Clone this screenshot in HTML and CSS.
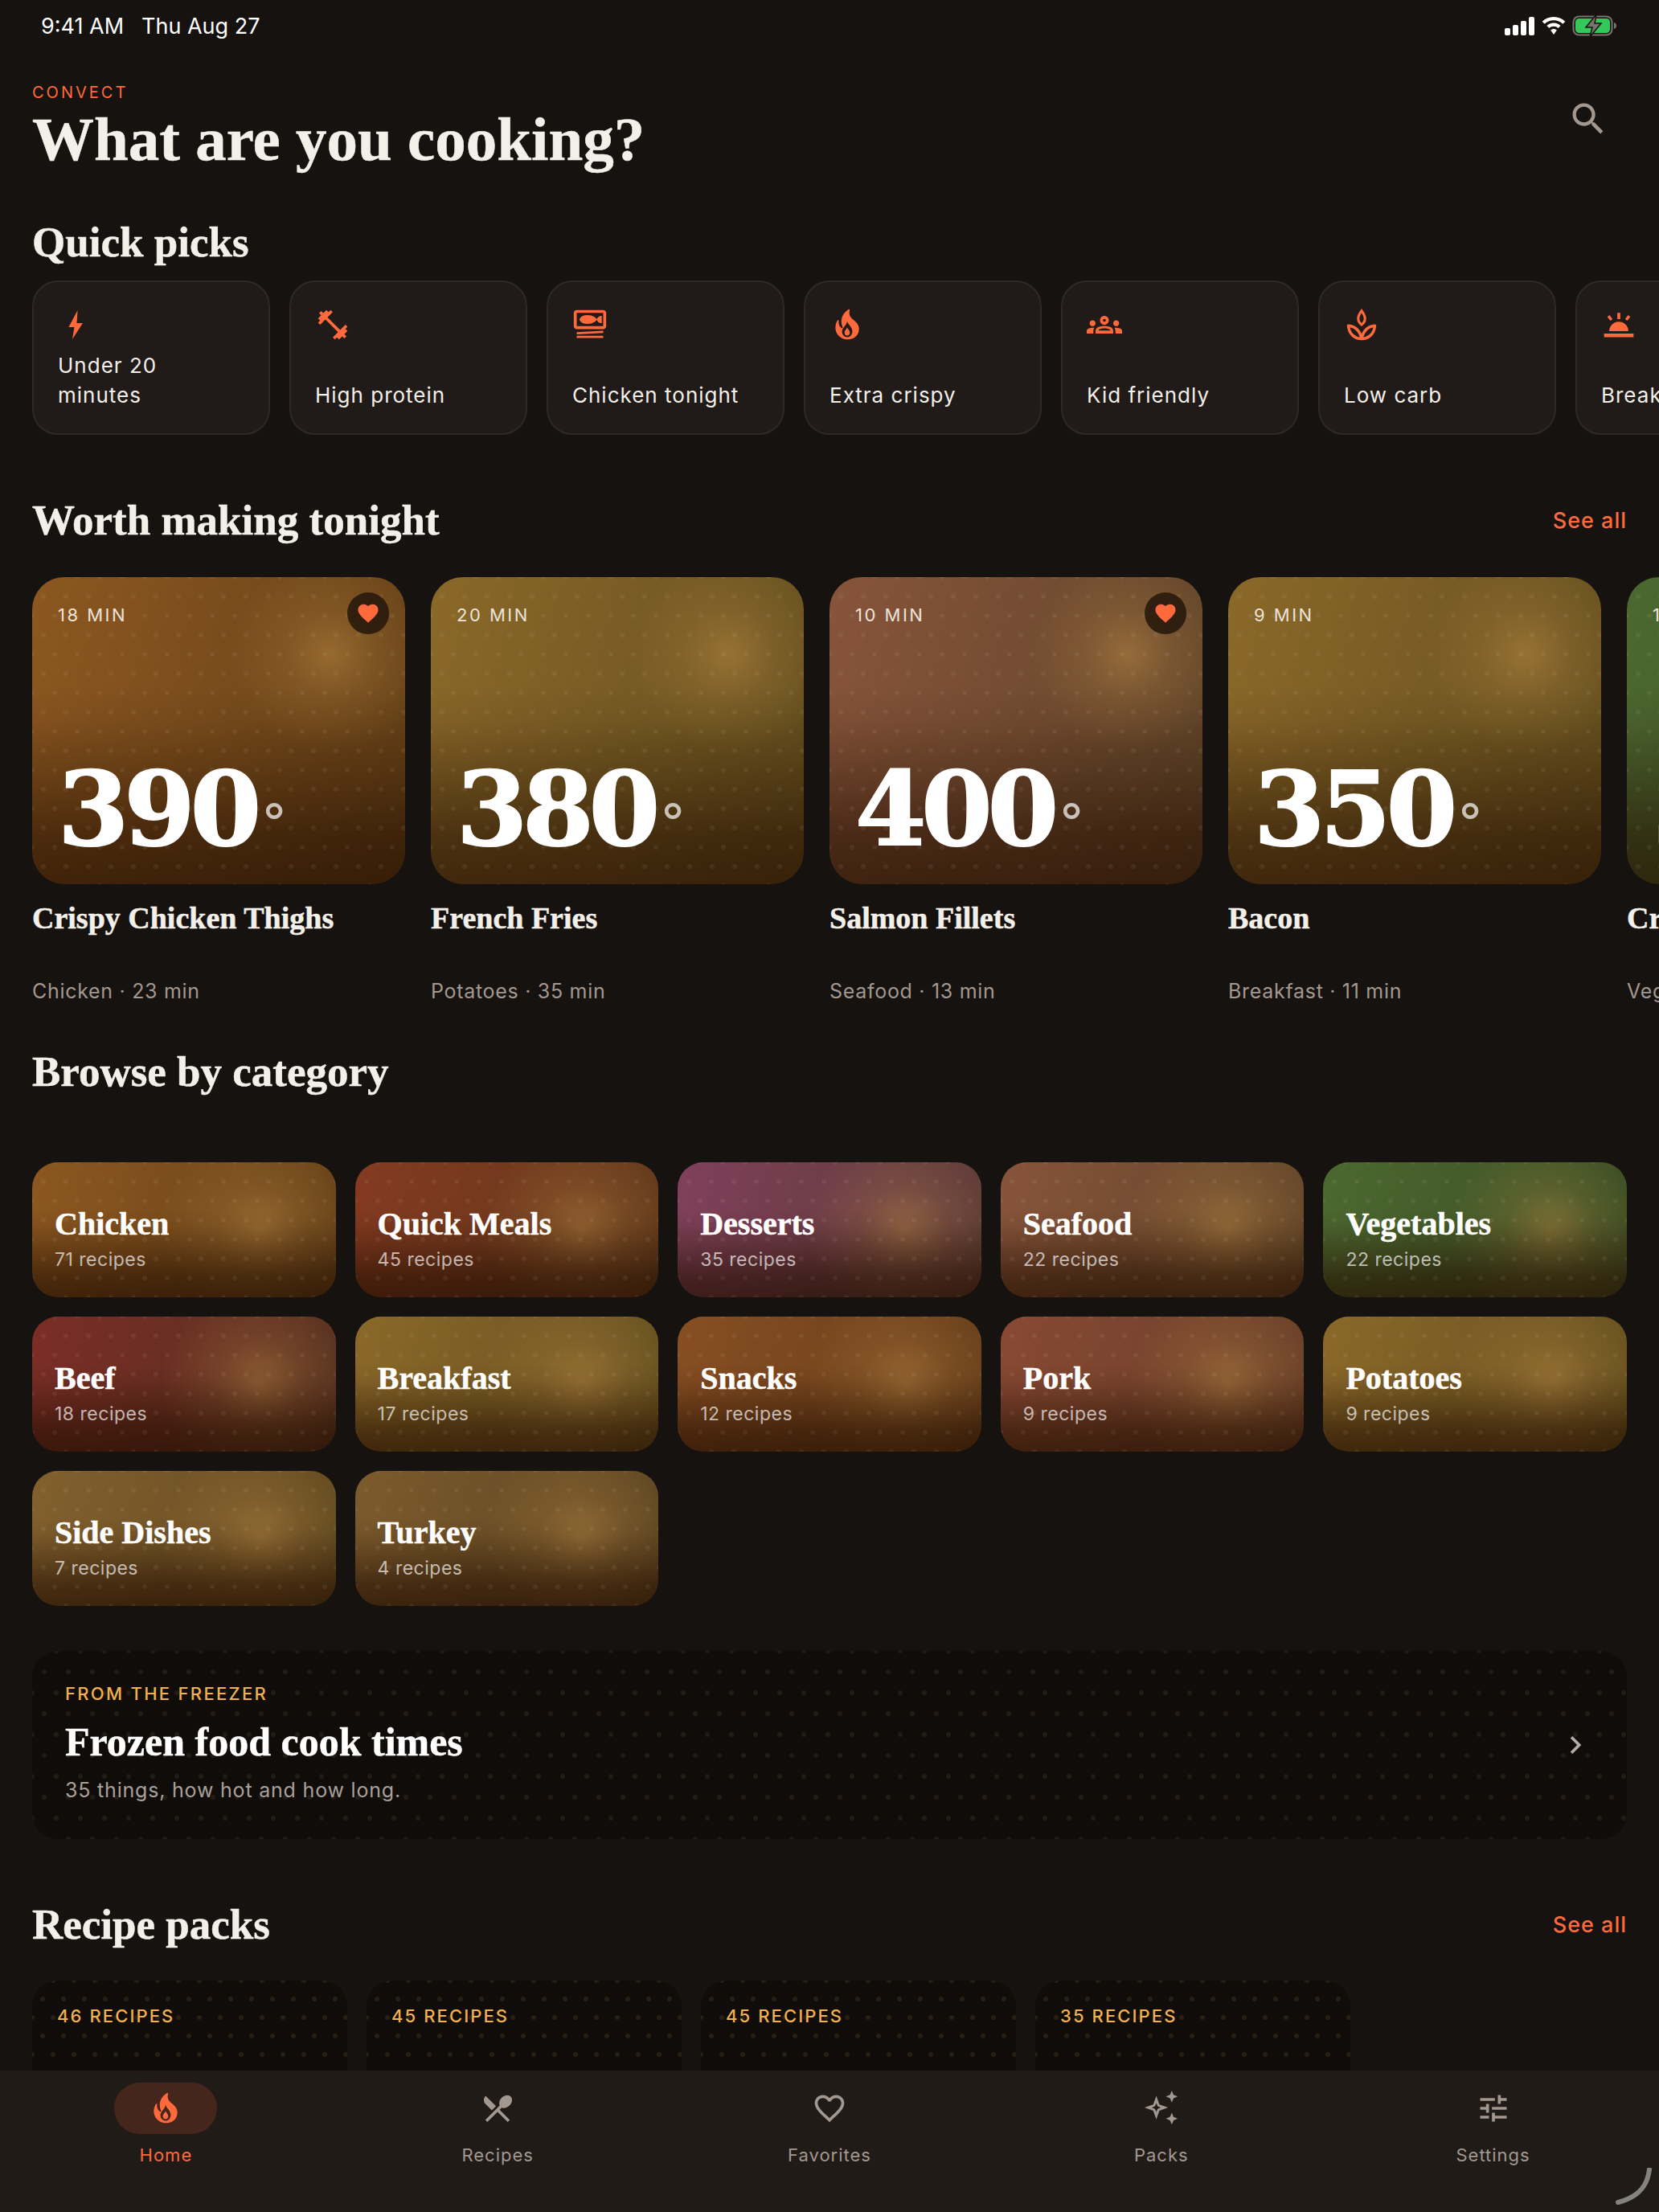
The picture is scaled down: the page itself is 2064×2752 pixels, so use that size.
FILE: index.html
```html
<!DOCTYPE html>
<html lang="en">
<head>
    <meta charset="UTF-8">
    <meta name="viewport" content="width=device-width, initial-scale=1.0">
    <title>Convect</title>
    <link rel="stylesheet" href="styles.css">
</head>
<body>
<div class="app">
    <div class="status-bar">
        <div class="status-time"><span>9:41 AM</span><span>Thu Aug 27</span></div>
        <div class="status-icons">
            <svg width="38" height="24" viewBox="0 0 38 24"><rect x="0" y="15" width="7" height="9" rx="2"/><rect x="10" y="11" width="7" height="13" rx="2"/><rect x="20" y="6" width="7" height="18" rx="2"/><rect x="30" y="1" width="7" height="23" rx="2"/></svg>
            <svg width="30" height="22" viewBox="0 0 30 22"><path d="M15 0C9.400 0 4.400 2.200.7 5.800l3 3C6.600 6 10.600 4.300 15 4.300s8.400 1.700 11.300 4.500l3-3C25.600 2.200 20.600 0 15 0z"/><path d="M15 7.500c-3.300 0-6.400 1.300-8.600 3.500l3 3c1.500-1.400 3.400-2.300 5.600-2.300s4.100.9 5.600 2.300l3-3c-2.200-2.200-5.300-3.500-8.600-3.500z"/><path d="M15 15c-1.500 0-2.900.6-3.900 1.600L15 22l3.900-5.400C17.900 15.600 16.500 15 15 15z"/></svg>
            <svg width="56" height="28" viewBox="0 0 56 28"><rect x="1.500" y="2.500" width="48" height="23" rx="7" fill="none" stroke="#77736f" stroke-width="2"/><rect x="4" y="5" width="43" height="18" rx="4.500" fill="#34c759"/><path d="M52 10c2 .5 3 2 3 4s-1 3.500-3 4z" fill="#77736f"/><path d="M30 0 17 16h8l-3 12 14-17h-8z" fill="#77736f" stroke="#15120f" stroke-width="1.500"/></svg>
        </div>
    </div>

    <div class="content">
        <header class="page-head">
            <div>
                <div class="brand">CONVECT</div>
                <h1>What are you cooking?</h1>
            </div>
            <svg class="search-icon" viewBox="0 0 24 24"><path d="M15.500 14h-.79l-.28-.27C15.410 12.590 16 11.110 16 9.500 16 5.910 13.090 3 9.500 3S3 5.910 3 9.500 5.910 16 9.500 16c1.610 0 3.090-.59 4.230-1.570l.27.28v.79l5 4.990L20.490 19l-4.990-5zm-6 0C7.010 14 5 11.990 5 9.500S7.010 5 9.500 5 14 7.010 14 9.500 11.990 14 9.500 14z"/></svg>
        </header>

        <section class="quick">
            <h2>Quick picks</h2>
            <div class="chip-row">
                <div class="chip">
                    <svg class="chip-icon" viewBox="0 0 44 44"><path d="M24.600 4 13.400 25h7.100L18 40l13-20h-7.500z"/></svg>
                    <div class="chip-label">Under 20<br>minutes</div>
                </div>
                <div class="chip">
                    <svg class="chip-icon" viewBox="0 0 24 24"><path d="M20.570 14.860 22 13.430 20.570 12 17 15.570 8.430 7 12 3.430 10.570 2 9.140 3.430 7.710 2 5.570 4.140 4.140 2.710 2.710 4.140l1.430 1.430L2 7.710l1.430 1.430L2 10.570 3.430 12 7 8.430 15.570 17 12 20.570 13.430 22l1.430-1.430L16.290 22l2.140-2.140 1.430 1.430 1.430-1.430-1.430-1.430L22 16.290z"/></svg>
                    <div class="chip-label">High protein</div>
                </div>
                <div class="chip">
                    <svg class="chip-icon" viewBox="0 0 24 24"><path d="M21.050 17.560 3.080 18.500 3 17l17.980-.94zM21 19.480H3v1.500h18zM23 13V4c0-1.100-.9-2-2-2H3C1.900 2 1 2.900 1 4v9c0 1.100.9 2 2 2h18c1.100 0 2-.9 2-2zm-2 0H3V4h18zM20 6c-1.680 0-3.040.98-3.210 2.230C16.150 7.500 14.060 5.500 10.250 5.500c-4.670 0-5.420 3-5.420 3s.75 3 5.420 3c3.810 0 5.900-2 6.540-2.730C16.960 10.020 18.320 11 20 11z"/></svg>
                    <div class="chip-label">Chicken tonight</div>
                </div>
                <div class="chip">
                    <svg class="chip-icon" viewBox="0 0 24 24"><path fill-rule="evenodd" d="M19.480 12.350c-1.570-4.080-7.160-4.300-5.810-10.230.1-.44-.37-.78-.75-.55C9.290 3.710 6.680 8 8.870 13.620c.18.46-.36.89-.75.59-1.810-1.370-2-3.340-1.840-4.750.06-.52-.62-.77-.91-.34C4.690 10.160 4 11.840 4 14.370c.38 5.600 5.110 7.320 6.810 7.540 2.430.31 5.060-.14 6.950-1.870 2.080-1.930 2.840-5.010 1.720-7.690zM12 9.500c.2 2 3.500 3.800 3.500 7 0 2.400-1.700 4-3.500 4s-3.500-1.600-3.500-3.800c0-2.700 3.200-4.200 3.500-7.200z"/><path d="M12 13.800c.3 1.200 1.800 2 1.800 3.600 0 1.100-.8 1.900-1.800 1.900s-1.800-.8-1.800-1.900c0-1.600 1.500-2.400 1.800-3.600z"/></svg>
                    <div class="chip-label">Extra crispy</div>
                </div>
                <div class="chip">
                    <svg class="chip-icon" viewBox="0 0 24 24"><path fill-rule="evenodd" d="M12 12.750c1.630 0 3.070.39 4.240.9 1.080.48 1.760 1.560 1.760 2.730V18H6v-1.610c0-1.180.68-2.260 1.760-2.730 1.170-.52 2.610-.91 4.240-.91zM8 16h8v-.2c0-.3-.2-.5-.5-.6-1-.4-2.200-.7-3.500-.7s-2.500.3-3.500.7c-.3.1-.5.3-.5.6zM12 6c-1.660 0-3 1.340-3 3s1.340 3 3 3 3-1.340 3-3-1.340-3-3-3zm0 2c.55 0 1 .45 1 1s-.45 1-1 1-1-.45-1-1 .45-1 1-1z"/><path d="M4 13c1.100 0 2-.9 2-2s-.9-2-2-2-2 .9-2 2 .9 2 2 2zm1.130 1.100C4.760 14.040 4.390 14 4 14c-.99 0-1.930.21-2.780.58C.48 14.900 0 15.620 0 16.430V18h4.500v-1.610c0-.83.23-1.610.63-2.290zM20 13c1.100 0 2-.9 2-2s-.9-2-2-2-2 .9-2 2 .9 2 2 2zm4 3.430c0-.81-.48-1.530-1.220-1.850C21.930 14.210 20.990 14 20 14c-.39 0-.76.04-1.130.1.4.68.63 1.460.63 2.290V18H24z"/></svg>
                    <div class="chip-label">Kid friendly</div>
                </div>
                <div class="chip">
                    <svg class="chip-icon" viewBox="0 0 24 24"><path d="M12 2.500c-1.300 1.800-2.300 3.500-2.300 5.300s1 3.300 2.300 4.200c1.300-.9 2.300-2.400 2.300-4.200S13.300 4.300 12 2.500z" fill="none" stroke="#ff6a3d" stroke-width="1.700"/><path d="M12 21.500c-4.500 0-8.500-3-9-8.800 3.800.3 7.600 2.400 9 8.800zm0 0c4.500 0 8.500-3 9-8.800-3.800.3-7.600 2.400-9 8.800z" fill="none" stroke="#ff6a3d" stroke-width="1.900" stroke-linejoin="round"/></svg>
                    <div class="chip-label">Low carb</div>
                </div>
                <div class="chip">
                    <svg class="chip-icon" viewBox="0 0 24 24"><path d="M2 18h20v2.400H2zM5.500 16.400a6.500 6.500 0 0 1 13 0zM11 4h2v4.200h-2zM4.200 6.700l1.500-1.300 2 2.800-1.400 1.100zM19.800 6.700l-1.500-1.300-2 2.800 1.400 1.100z"/></svg>
                    <div class="chip-label">Breakfast</div>
                </div>
            </div>
        </section>

        <section class="tonight">
            <div class="section-head">
                <h2>Worth making tonight</h2>
                <a class="see-all">See all</a>
            </div>
            <div class="recipe-row">
                <article class="recipe">
                    <div class="recipe-art tone-chicken">
                        <div class="recipe-time">18 MIN</div>
                        <div class="fav"><svg viewBox="0 0 24 24"><path d="M12 21.350 10.550 20.030C5.400 15.360 2 12.280 2 8.500 2 5.420 4.420 3 7.500 3c1.740 0 3.410.81 4.500 2.090C13.090 3.810 14.760 3 16.500 3 19.580 3 22 5.420 22 8.500c0 3.780-3.400 6.860-8.550 11.540z"/></svg></div>
                        <div class="temp">390<span class="deg">°</span></div>
                    </div>
                    <h3>Crispy Chicken Thighs</h3>
                    <p>Chicken · 23 min</p>
                </article>
                <article class="recipe">
                    <div class="recipe-art tone-potato">
                        <div class="recipe-time">20 MIN</div>
                        <div class="temp">380<span class="deg">°</span></div>
                    </div>
                    <h3>French Fries</h3>
                    <p>Potatoes · 35 min</p>
                </article>
                <article class="recipe">
                    <div class="recipe-art tone-seafood">
                        <div class="recipe-time">10 MIN</div>
                        <div class="fav"><svg viewBox="0 0 24 24"><path d="M12 21.350 10.550 20.030C5.400 15.360 2 12.280 2 8.500 2 5.420 4.420 3 7.500 3c1.740 0 3.410.81 4.500 2.090C13.090 3.810 14.760 3 16.500 3 19.580 3 22 5.420 22 8.500c0 3.780-3.400 6.860-8.550 11.540z"/></svg></div>
                        <div class="temp">400<span class="deg">°</span></div>
                    </div>
                    <h3>Salmon Fillets</h3>
                    <p>Seafood · 13 min</p>
                </article>
                <article class="recipe">
                    <div class="recipe-art tone-potato">
                        <div class="recipe-time">9 MIN</div>
                        <div class="temp">350<span class="deg">°</span></div>
                    </div>
                    <h3>Bacon</h3>
                    <p>Breakfast · 11 min</p>
                </article>
                <article class="recipe">
                    <div class="recipe-art tone-veg">
                        <div class="recipe-time">12 MIN</div>
                        <div class="temp">375<span class="deg">°</span></div>
                    </div>
                    <h3>Crispy Sprouts</h3>
                    <p>Vegetables · 15 min</p>
                </article>
            </div>
        </section>

        <section class="browse">
            <h2>Browse by category</h2>
            <div class="cat-grid">
                <div class="cat tone-chicken"><h4>Chicken</h4><p>71 recipes</p></div>
                <div class="cat tone-quick"><h4>Quick Meals</h4><p>45 recipes</p></div>
                <div class="cat tone-dessert"><h4>Desserts</h4><p>35 recipes</p></div>
                <div class="cat tone-seafood"><h4>Seafood</h4><p>22 recipes</p></div>
                <div class="cat tone-veg"><h4>Vegetables</h4><p>22 recipes</p></div>
                <div class="cat tone-beef"><h4>Beef</h4><p>18 recipes</p></div>
                <div class="cat tone-potato"><h4>Breakfast</h4><p>17 recipes</p></div>
                <div class="cat tone-snack"><h4>Snacks</h4><p>12 recipes</p></div>
                <div class="cat tone-pork"><h4>Pork</h4><p>9 recipes</p></div>
                <div class="cat tone-potato"><h4>Potatoes</h4><p>9 recipes</p></div>
                <div class="cat tone-side"><h4>Side Dishes</h4><p>7 recipes</p></div>
                <div class="cat tone-turkey"><h4>Turkey</h4><p>4 recipes</p></div>
            </div>
        </section>

        <div class="freezer">
            <div>
                <div class="freezer-tag">FROM THE FREEZER</div>
                <div class="freezer-title">Frozen food cook times</div>
                <div class="freezer-sub">35 things, how hot and how long.</div>
            </div>
            <svg class="chevron" viewBox="0 0 24 24"><path d="M10 6 8.590 7.410 13.170 12l-4.580 4.590L10 18l6-6z"/></svg>
        </div>

        <section class="packs">
            <div class="section-head">
                <h2>Recipe packs</h2>
                <a class="see-all">See all</a>
            </div>
            <div class="pack-row">
                <div class="pack">46 RECIPES</div>
                <div class="pack">45 RECIPES</div>
                <div class="pack">45 RECIPES</div>
                <div class="pack">35 RECIPES</div>
            </div>
        </section>
    </div>

    <nav class="tab-bar">
        <div class="tab active">
            <div class="tab-pill">
                <svg viewBox="0 0 24 24"><path fill-rule="evenodd" d="M19.480 12.350c-1.570-4.080-7.160-4.300-5.810-10.230.1-.44-.37-.78-.75-.55C9.290 3.710 6.680 8 8.870 13.620c.18.46-.36.89-.75.59-1.810-1.370-2-3.340-1.840-4.750.06-.52-.62-.77-.91-.34C4.690 10.160 4 11.840 4 14.370c.38 5.600 5.110 7.320 6.810 7.540 2.430.31 5.060-.14 6.950-1.870 2.080-1.930 2.840-5.010 1.720-7.690zM12 9.500c.2 2 3.500 3.800 3.500 7 0 2.400-1.700 4-3.500 4s-3.500-1.600-3.500-3.800c0-2.700 3.200-4.200 3.500-7.200z"/><path d="M12 13.800c.3 1.200 1.800 2 1.800 3.600 0 1.100-.8 1.900-1.800 1.900s-1.800-.8-1.800-1.900c0-1.600 1.500-2.400 1.800-3.600z"/></svg>
            </div>
            <span>Home</span>
        </div>
        <div class="tab">
            <div class="tab-pill">
                <svg viewBox="0 0 24 24"><path d="M8.100 13.340l2.830-2.830L3.910 3.500c-1.560 1.560-1.560 4.090 0 5.660zm6.780-1.810c1.530.71 3.680.21 5.270-1.380 1.910-1.910 2.280-4.650.81-6.120-1.460-1.460-4.200-1.100-6.120.81-1.590 1.590-2.090 3.740-1.380 5.270L3.700 19.870l1.410 1.410L12 14.410l6.880 6.880 1.410-1.410L13.410 13z"/></svg>
            </div>
            <span>Recipes</span>
        </div>
        <div class="tab">
            <div class="tab-pill">
                <svg viewBox="0 0 24 24"><path d="M16.500 3c-1.740 0-3.410.81-4.500 2.090C10.910 3.810 9.240 3 7.500 3 4.420 3 2 5.420 2 8.500c0 3.780 3.400 6.860 8.550 11.540L12 21.350l1.450-1.320C18.600 15.360 22 12.280 22 8.500 22 5.420 19.580 3 16.500 3zm-4.400 15.550l-.1.100-.1-.1C7.140 14.240 4 11.390 4 8.500 4 6.500 5.500 5 7.500 5c1.540 0 3.040.99 3.570 2.360h1.870C13.460 5.990 14.960 5 16.500 5c2 0 3.500 1.500 3.500 3.500 0 2.890-3.140 5.740-7.900 10.050z"/></svg>
            </div>
            <span>Favorites</span>
        </div>
        <div class="tab">
            <div class="tab-pill">
                <svg viewBox="0 0 24 24"><path fill-rule="evenodd" d="M8.500 3.500 10.600 9.400 16.500 11.500 10.600 13.600 8.500 19.500 6.400 13.600.5 11.500 6.400 9.400zM8.500 8.500 7.600 10.600 5.500 11.500 7.600 12.400 8.500 14.500 9.400 12.400 11.500 11.500 9.400 10.600z"/><path d="M19 0l1.200 2.800L23 4l-2.800 1.200L19 8l-1.200-2.800L15 4l2.800-1.200zM19 15l1.200 2.800L23 19l-2.800 1.200L19 23l-1.200-2.800L15 19l2.800-1.200z"/></svg>
            </div>
            <span>Packs</span>
        </div>
        <div class="tab">
            <div class="tab-pill">
                <svg viewBox="0 0 24 24"><path d="M3 17v2h6v-2zM3 5v2h10V5zm10 16v-2h8v-2h-8v-2h-2v6zM7 9v2H3v2h4v2h2V9zm14 4v-2H11v2zm-6-4h2V7h4V5h-4V3h-2v6z"/></svg>
            </div>
            <span>Settings</span>
        </div>
        <svg class="corner-mark" viewBox="0 0 46 46"><path d="M43 2C41 20 32 36 4 43" fill="none" stroke="#85837f" stroke-width="6" stroke-linecap="round"/></svg>
    </nav>
</div>
</body>
</html>
```

FILE: styles.css
```css
* {
    box-sizing: border-box;
}
body {
    margin: 0;
    background-color: #15120f;
    color: #f3efe9;
    font-family: 'Inter', sans-serif;
}
h1, h2, h3, h4, p {
    margin: 0;
}
h1, h2, h3, h4 {
    font-family: 'Liberation Serif', serif;
    font-weight: 700;
    -webkit-text-stroke: 0.5px currentColor;
}
.app {
    width: 2064px;
    height: 2752px;
    display: flex;
    flex-direction: column;
    overflow: hidden;
}
.status-bar {
    height: 64px;
    flex: none;
    display: flex;
    justify-content: space-between;
    align-items: center;
    padding: 0 52px 0 51px;
    color: #fff;
}
.status-time {
    display: flex;
    gap: 22px;
    font-size: 27px;
}
.status-icons {
    display: flex;
    align-items: center;
    gap: 8px;
}
.status-icons svg {
    fill: #fff;
}
.content {
    flex: 1;
    overflow: hidden;
    padding: 0 40px;
}
.page-head {
    display: flex;
    justify-content: space-between;
    padding-top: 39px;
}
.brand {
    font-size: 20px;
    line-height: 24px;
    letter-spacing: 3px;
    color: #ff6a3d;
}
h1 {
    font-size: 77px;
    line-height: 84px;
    margin-top: 4px;
}
.search-icon {
    width: 52px;
    height: 52px;
    fill: #a39890;
    margin: 19px 22px 0 0;
}
h2 {
    font-size: 53px;
    line-height: 60px;
}
.quick {
    margin-top: 56px;
}
.chip-row {
    display: flex;
    gap: 24px;
    margin-top: 18px;
    width: 2400px;
}
.chip {
    width: 296px;
    height: 192px;
    flex: none;
    display: flex;
    flex-direction: column;
    justify-content: space-between;
    padding: 31px 30px 29px;
    background-color: #201b18;
    border: 2px solid #2f2925;
    border-radius: 32px;
}
.chip-icon {
    width: 44px;
    height: 44px;
    fill: #ff6a3d;
}
.chip-label {
    font-size: 26px;
    line-height: 37px;
    letter-spacing: 1px;
    color: #f3efe9;
}
.tonight {
    margin-top: 76px;
}
.section-head {
    display: flex;
    justify-content: space-between;
    align-items: center;
}
.see-all {
    font-size: 27px;
    font-weight: 500;
    letter-spacing: 1px;
    color: #ff6a3d;
}
.recipe-row {
    display: flex;
    gap: 32px;
    margin-top: 41px;
    width: 2500px;
}
.recipe {
    width: 464px;
    flex: none;
}
.recipe-art {
    position: relative;
    height: 382px;
    display: flex;
    flex-direction: column;
    justify-content: space-between;
    padding: 32px 32px 27px;
    border-radius: 40px;
}
.recipe-art, .cat {
    --glow-x: 80%;
    --glow-y: 25%;
    background-image:
        radial-gradient(circle, rgba(255, 255, 255, 0.06) 2.500px, transparent 3.500px),
        radial-gradient(circle, rgba(255, 255, 255, 0.06) 2.500px, transparent 3.500px),
        linear-gradient(180deg, rgba(35, 14, 0, 0) 35%, rgba(35, 14, 0, 0.08) 47%, rgba(35, 14, 0, 0.32) 65%, rgba(35, 14, 0, 0.6) 85%, rgba(35, 14, 0, 0.7) 100%),
        radial-gradient(circle at var(--glow-x) var(--glow-y), rgba(190, 140, 70, 0.5), rgba(190, 140, 70, 0.2) 55px, rgba(190, 140, 70, 0) 125px),
        linear-gradient(100deg, var(--tone-a), var(--tone-b));
    background-size: 28px 48px, 28px 48px, auto, auto, auto;
    background-position: 0 0, 14px 24px, 0 0, 0 0, 0 0;
}
.cat {
    --glow-x: 75%;
    --glow-y: 50%;
}
.tone-chicken { --tone-a: #8c5720; --tone-b: #654118; }
.tone-potato { --tone-a: #8a6829; --tone-b: #65501f; }
.tone-seafood { --tone-a: #87543a; --tone-b: #604529; }
.tone-veg { --tone-a: #4c6830; --tone-b: #394c23; }
.tone-quick { --tone-a: #843a20; --tone-b: #5f381b; }
.tone-dessert { --tone-a: #80405a; --tone-b: #5a3936; }
.tone-beef { --tone-a: #7b2d26; --tone-b: #54301f; }
.tone-snack { --tone-a: #874e22; --tone-b: #663d1a; }
.tone-pork { --tone-a: #884933; --tone-b: #673e28; }
.tone-side { --tone-a: #82602e; --tone-b: #614920; }
.tone-turkey { --tone-a: #7b5a2d; --tone-b: #5d4522; }
.recipe-time {
    font-size: 22px;
    line-height: 30px;
    letter-spacing: 2.500px;
    color: #ece3d8;
}
.fav {
    position: absolute;
    top: 19px;
    right: 20px;
    width: 52px;
    height: 52px;
    border-radius: 50%;
    background-color: rgba(35, 22, 10, 0.85);
    display: flex;
    align-items: center;
    justify-content: center;
}
.fav svg {
    width: 30px;
    height: 30px;
    fill: #ff6a3d;
}
.temp {
    font-family: 'DejaVu Serif', serif;
    font-weight: 700;
    font-size: 127px;
    line-height: 132px;
    letter-spacing: -6px;
    -webkit-text-stroke: 2px #fff;
    color: #fff;
}
.deg {
    font-family: 'Inter', sans-serif;
    font-weight: 400;
    font-size: 62px;
    line-height: 0;
    letter-spacing: 0;
    margin-left: 8px;
    vertical-align: 7px;
    -webkit-text-stroke: 0;
    color: rgba(255, 255, 255, 0.7);
}
h3 {
    font-size: 38px;
    line-height: 46px;
    margin-top: 19px;
}
.recipe p {
    font-size: 25px;
    line-height: 32px;
    letter-spacing: 0.700px;
    color: #a39890;
    margin-top: 52px;
}
.browse {
    margin-top: 54px;
}
.cat-grid {
    display: grid;
    grid-template-columns: repeat(5, 1fr);
    gap: 24px;
    margin-top: 83px;
}
.cat {
    height: 168px;
    display: flex;
    flex-direction: column;
    justify-content: flex-end;
    padding: 0 28px 32px;
    border-radius: 32px;
}
h4 {
    font-size: 40px;
    line-height: 46px;
    color: #fff;
}
.cat p {
    font-size: 23px;
    line-height: 30px;
    letter-spacing: 0.500px;
    margin-top: 6px;
    color: rgba(255, 255, 255, 0.68);
}
.freezer {
    margin-top: 56px;
    height: 234px;
    display: flex;
    justify-content: space-between;
    align-items: center;
    padding: 0 42px 7px 41px;
    border-radius: 32px;
    background-color: #0f0c09;
    background-image:
        radial-gradient(circle, rgba(255, 210, 140, 0.08) 2.500px, transparent 3.500px),
        radial-gradient(circle, rgba(255, 210, 140, 0.08) 2.500px, transparent 3.500px);
    background-size: 30px 52px;
    background-position: 0 0, 15px 26px;
}
.freezer-tag {
    font-size: 22px;
    line-height: 28px;
    letter-spacing: 2.300px;
    font-weight: 500;
    color: #f2b14e;
}
.freezer-title {
    font-family: 'Liberation Serif', serif;
    font-weight: 700;
    -webkit-text-stroke: 0.5px currentColor;
    font-size: 50px;
    line-height: 54px;
    margin-top: 19px;
    color: #fff;
}
.freezer-sub {
    font-size: 25px;
    line-height: 32px;
    letter-spacing: 0.800px;
    margin-top: 17px;
    color: #a8a09a;
}
.chevron {
    width: 44px;
    height: 44px;
    fill: #b5aca4;
    margin-top: 7px;
}
.packs {
    margin-top: 76px;
}
.pack-row {
    display: flex;
    gap: 24px;
    margin-top: 40px;
}
.pack {
    width: 392px;
    height: 200px;
    flex: none;
    padding: 30px 31px;
    border-radius: 32px;
    font-size: 22px;
    line-height: 28px;
    letter-spacing: 2.100px;
    font-weight: 500;
    color: #f2b14e;
    background-color: #0f0c09;
    background-image:
        radial-gradient(circle, rgba(255, 200, 120, 0.1) 2.500px, transparent 3.500px),
        radial-gradient(circle, rgba(255, 200, 120, 0.1) 2.500px, transparent 3.500px);
    background-size: 26px 46px;
    background-position: 0 0, 13px 23px;
}
.tab-bar {
    position: relative;
    height: 176px;
    flex: none;
    display: grid;
    grid-template-columns: repeat(5, 1fr);
    background-color: #201b17;
    padding-top: 15px;
}
.tab {
    display: flex;
    flex-direction: column;
    align-items: center;
    font-size: 22px;
    letter-spacing: 1px;
    color: #a39890;
}
.tab span {
    margin-top: 12px;
    line-height: 28px;
}
.tab-pill {
    width: 128px;
    height: 64px;
    border-radius: 32px;
    display: flex;
    align-items: center;
    justify-content: center;
}
.tab-pill svg {
    width: 44px;
    height: 44px;
    fill: #a39890;
}
.tab.active {
    color: #ff6a3d;
}
.tab.active .tab-pill {
    background-color: #45261c;
}
.tab.active svg {
    fill: #ff6a3d;
}
.corner-mark {
    position: absolute;
    right: 9px;
    bottom: 9px;
    width: 46px;
    height: 46px;
}
```
